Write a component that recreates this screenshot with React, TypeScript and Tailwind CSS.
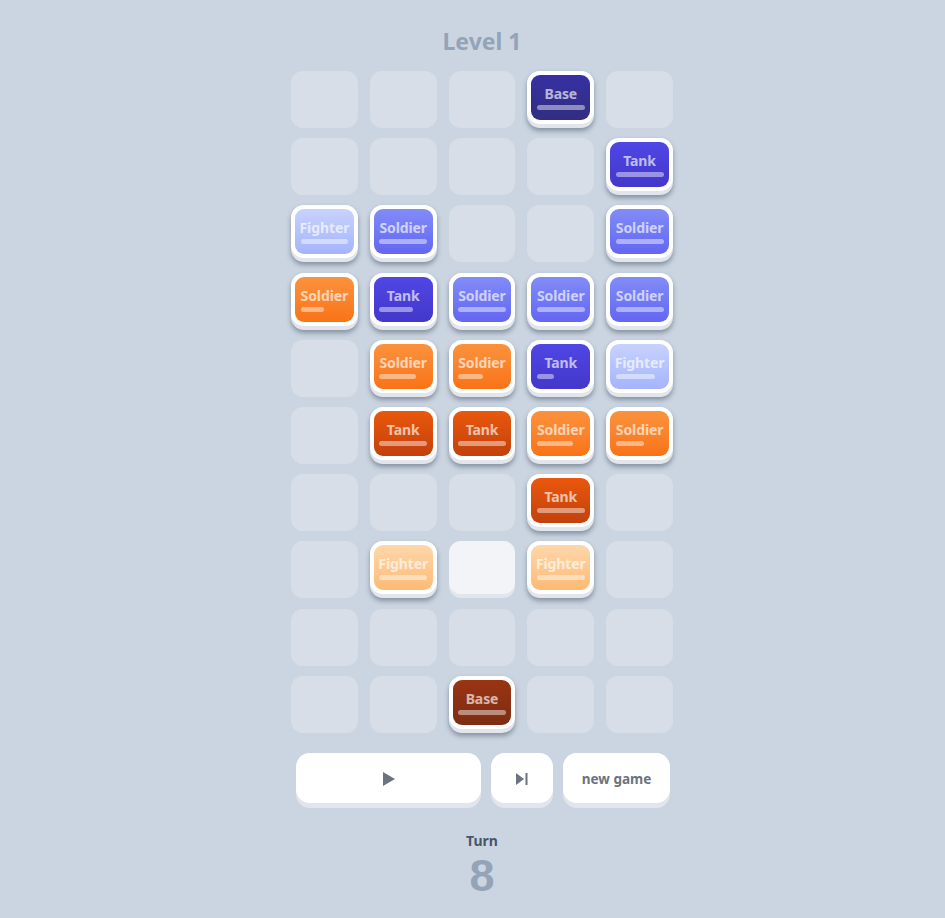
import React from "react";

type Side = "B" | "O";
type Kind = "Base" | "Tank" | "Soldier" | "Fighter";
type Cell = null | "H" | { s: Side; k: Kind; hp?: number };

const t = (s: Side, k: Kind, hp = 1): Cell => ({ s, k, hp });

const grid: Cell[][] = [
  [null, null, null, t("B", "Base"), null],
  [null, null, null, null, t("B", "Tank")],
  [t("B", "Fighter"), t("B", "Soldier"), null, null, t("B", "Soldier")],
  [t("O", "Soldier", 0.5), t("B", "Tank", 0.71), t("B", "Soldier"), t("B", "Soldier"), t("B", "Soldier")],
  [null, t("O", "Soldier", 0.77), t("O", "Soldier", 0.52), t("B", "Tank", 0.35), t("B", "Fighter", 0.83)],
  [null, t("O", "Tank"), t("O", "Tank"), t("O", "Soldier", 0.75), t("O", "Soldier", 0.6)],
  [null, null, null, t("O", "Tank"), null],
  [null, t("O", "Fighter"), "H", t("O", "Fighter"), null],
  [null, null, null, null, null],
  [null, null, t("O", "Base"), null, null],
];

const colors: Record<string, string> = {
  BBase: "bg-gradient-to-b from-[#3730a3] to-[#312e81]",
  BTank: "bg-gradient-to-b from-[#4f46e5] to-[#4338ca]",
  BSoldier: "bg-gradient-to-b from-[#818cf8] to-[#6366f1]",
  BFighter: "bg-gradient-to-b from-[#c7d2fe] to-[#a5b4fc]",
  OBase: "bg-gradient-to-b from-[#9a3412] to-[#7c2d12]",
  OTank: "bg-gradient-to-b from-[#ea580c] to-[#c2410c]",
  OSoldier: "bg-gradient-to-b from-[#fb923c] to-[#f97316]",
  OFighter: "bg-gradient-to-b from-[#fed7aa] to-[#fdba74]",
};

function Tile({ s, k, hp = 1 }: { s: Side; k: Kind; hp?: number }) {
  return (
    <div className="h-full rounded-[13px] bg-[#e2e6ec] pb-[4px] shadow-[0_3px_5px_rgba(51,65,85,0.45)]">
      <div className="h-full rounded-[13px] bg-white p-[4px]">
        <div className={`h-full rounded-[9px] ${colors[s + k]} flex flex-col items-center justify-center gap-[3px] px-[5.5px] pt-[1px]`}>
          <div className="text-[14px] leading-[16px] font-bold text-white/65 tracking-[-0.1px]">{k}</div>
          <div className="w-full h-[5px]">
            <div className="h-full rounded-full bg-white/45" style={{ width: `${hp * 100}%` }} />
          </div>
        </div>
      </div>
    </div>
  );
}

function PlayIcon() {
  return (
    <svg width="12" height="14" viewBox="0 0 12 14">
      <path d="M0 0 L12 7 L0 14 Z" fill="#6b7280" />
    </svg>
  );
}

function SkipIcon() {
  return (
    <svg width="12" height="12" viewBox="0 0 12 12">
      <path d="M0 0 L8 6 L0 12 Z" fill="#6b7280" />
      <rect x="9.5" y="0" width="2" height="12" fill="#6b7280" />
    </svg>
  );
}

export default function App() {
  return (
    <div
      className="min-h-[918px] w-full bg-[#cbd5e1] pl-[19px] flex flex-col items-center"
      style={{ fontFamily: '"Noto Sans", "Open Sans", sans-serif' }}
    >
      <div className="pt-[26px] text-[23px] leading-[30px] font-bold text-[#94a3b8]">Level 1</div>
      <div className="mt-[15px] w-[382px] grid grid-cols-5 gap-x-[12px] gap-y-[10.2px] auto-rows-[57px]">
        {grid.flatMap((row, r) =>
          row.map((c, ci) => {
            if (c === null)
              return <div key={`${r}-${ci}`} className="rounded-[12px] bg-[#d7dee7]" />;
            if (c === "H")
              return (
                <div key={`${r}-${ci}`} className="rounded-[12px] bg-[#e2e6ec] pb-[4px]">
                  <div className="h-full rounded-[12px] bg-[#f2f4f7]" />
                </div>
              );
            return (
              <div key={`${r}-${ci}`}>
                <Tile s={c.s} k={c.k} hp={c.hp} />
              </div>
            );
          })
        )}
      </div>
      <div className="mt-[20px] w-[374px] ml-[2px] flex gap-[10px] h-[55px]">
        <button className="flex-1 rounded-[14px] bg-[#e2e6ec] pb-[5px]">
          <div className="h-full rounded-[14px] bg-white flex items-center justify-center pt-[2px]">
            <PlayIcon />
          </div>
        </button>
        <button className="w-[62px] rounded-[14px] bg-[#e2e6ec] pb-[5px]">
          <div className="h-full rounded-[14px] bg-white flex items-center justify-center pt-[2px]">
            <SkipIcon />
          </div>
        </button>
        <button className="w-[107px] rounded-[14px] bg-[#e2e6ec] pb-[5px]">
          <div className="h-full rounded-[14px] bg-white flex items-center justify-center pt-[3px] text-[13.5px] font-bold text-[#6b7280]">
            new game
          </div>
        </button>
      </div>
      <div className="mt-[24px] text-[14px] leading-[18px] font-bold text-[#475569]">Turn</div>
      <div
        className="mt-[3px] text-[45px] leading-[45px] font-bold text-[#94a3b8]"
        style={{ fontFamily: '"Liberation Sans", Arial, sans-serif' }}
      >
        8
      </div>
    </div>
  );
}
